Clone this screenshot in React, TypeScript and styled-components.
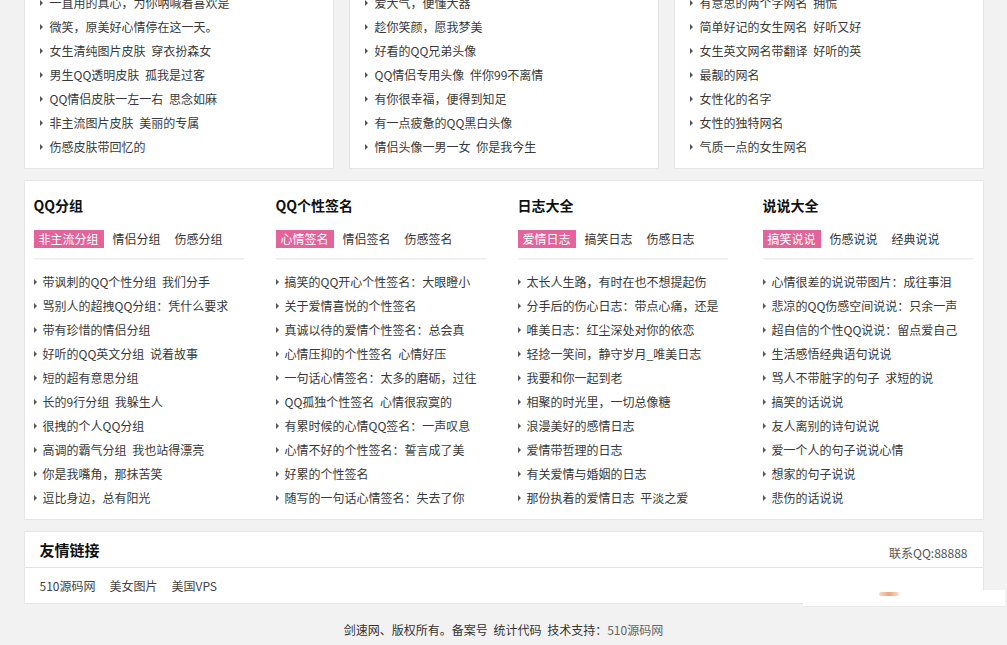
import React from "react";
import styled, { createGlobalStyle } from "styled-components";

const Global = createGlobalStyle`
  html, body { margin: 0; padding: 0; overflow: hidden; }
  body {
    background: #f2f2f2;
    font-family: "Noto Sans CJK SC", "Liberation Sans", sans-serif;
    font-size: 12px;
    color: #333;
  }
  ul { list-style: none; margin: 0; padding: 0; }
`;

const Wrap = styled.div`
  width: 960px;
  margin: 0 auto;
`;

const TopRow = styled.div`
  display: flex;
  gap: 15px;
  margin-top: -20px;
`;

const Card = styled.div`
  background: #fff;
  border: 1px solid #e6e6e6;
  box-sizing: border-box;
`;

const SmallCard = styled(Card)`
  width: 310px;
  padding: 10px 15px 9px 15px;
`;

const Item = styled.li<{ $gap?: number }>`
  display: flex;
  align-items: center;
  height: 24px;
  line-height: 24px;
  white-space: pre;
  word-spacing: 3px;
  overflow: hidden;
  color: #383838;
  &::before {
    content: "";
    flex: none;
    width: 0;
    height: 0;
    border-left: 3px solid #555;
    border-top: 3px solid transparent;
    border-bottom: 3px solid transparent;
    margin-right: ${(p) => p.$gap ?? 7}px;
  }
`;

const BigCard = styled(Card)`
  margin-top: 11px;
  padding: 14px 10px 9px 9px;
  display: flex;
`;

const Column = styled.div<{ $last?: boolean }>`
  width: 210px;
  flex: none;
  margin-right: ${(p) => (p.$last ? 0 : 32)}px;
  margin-left: ${(p) => (p.$last ? "auto" : 0)};
`;

const Title = styled.h3`
  margin: 0;
  height: 20px;
  line-height: 20px;
  font-size: 14px;
  font-weight: bold;
  color: #111;
`;

const Tabs = styled.div`
  display: flex;
  gap: 4px;
  margin-top: 15px;
  padding-bottom: 10px;
  border-bottom: 1px solid #ececec;
  box-shadow: 0 1px 0 #f6f6f6;
`;

const Tab = styled.span<{ $active?: boolean }>`
  display: inline-block;
  height: 18px;
  line-height: 18px;
  padding: 0 5px;
  color: ${(p) => (p.$active ? "#fff" : "#333")};
  background: ${(p) => (p.$active ? "#e2649a" : "transparent")};
`;

const ColList = styled.ul`
  margin-top: 11px;
`;

const LinksCard = styled(Card)`
  margin-top: 11px;
`;

const LinksHead = styled.div`
  display: flex;
  align-items: center;
  justify-content: space-between;
  height: 35px;
  padding: 0 15px;
  border-bottom: 1px solid #e3e3e3;
`;

const LinksTitle = styled.h3`
  margin: 0;
  font-size: 15px;
  font-weight: bold;
  color: #111;
`;

const Contact = styled.span`
  color: #555;
  padding-top: 5px;
`;

const LinksBody = styled.div`
  display: flex;
  align-items: center;
  gap: 14px;
  height: 35px;
  padding: 0 15px;
`;

const LinkA = styled.a`
  color: #444;
  text-decoration: none;
`;

const Footer = styled.div`
  text-align: center;
  padding-top: 14px;
  line-height: 24px;
  color: #333;
  word-spacing: 3px;
`;

const FootLink = styled.span`
  color: #666;
`;

const Overlay = styled.div`
  position: fixed;
  left: 803px;
  top: 590px;
  width: 202px;
  height: 16px;
  background: #fff;
  border-bottom: 1px solid #e8e8e8;
  &::after {
    content: "";
    position: absolute;
    left: 76px;
    top: 2px;
    width: 20px;
    height: 4px;
    border-radius: 2px;
    background: linear-gradient(90deg, #f3d2bd, #e5905c, #f4d7c6);
    opacity: 0.8;
  }
`;

const top = [
  [
    "一直用的真心，为你呐喊着喜欢是",
    "微笑，原美好心情停在这一天。",
    "女生清纯图片皮肤 穿衣扮森女",
    "男生QQ透明皮肤 孤我是过客",
    "QQ情侣皮肤一左一右 思念如麻",
    "非主流图片皮肤 美丽的专属",
    "伤感皮肤带回忆的",
  ],
  [
    "爱大气，便懂大器",
    "趁你笑颜，愿我梦美",
    "好看的QQ兄弟头像",
    "QQ情侣专用头像 伴你99不离情",
    "有你很幸福，便得到知足",
    "有一点疲惫的QQ黑白头像",
    "情侣头像一男一女 你是我今生",
  ],
  [
    "有意思的两个字网名 拥慌",
    "简单好记的女生网名 好听又好",
    "女生英文网名带翻译 好听的英",
    "最靓的网名",
    "女性化的名字",
    "女性的独特网名",
    "气质一点的女生网名",
  ],
];

const cols = [
  {
    title: "QQ分组",
    tabs: ["非主流分组", "情侣分组", "伤感分组"],
    items: [
      "带讽刺的QQ个性分组 我们分手",
      "骂别人的超拽QQ分组：凭什么要求",
      "带有珍惜的情侣分组",
      "好听的QQ英文分组 说着故事",
      "短的超有意思分组",
      "长的9行分组 我躲生人",
      "很拽的个人QQ分组",
      "高调的霸气分组 我也站得漂亮",
      "你是我嘴角，那抹苦笑",
      "逗比身边，总有阳光",
    ],
  },
  {
    title: "QQ个性签名",
    tabs: ["心情签名", "情侣签名", "伤感签名"],
    items: [
      "搞笑的QQ开心个性签名：大眼瞪小",
      "关于爱情喜悦的个性签名",
      "真诚以待的爱情个性签名：总会真",
      "心情压抑的个性签名 心情好压",
      "一句话心情签名：太多的磨砺，过往",
      "QQ孤独个性签名 心情很寂寞的",
      "有累时候的心情QQ签名：一声叹息",
      "心情不好的个性签名：誓言成了美",
      "好累的个性签名",
      "随写的一句话心情签名：失去了你",
    ],
  },
  {
    title: "日志大全",
    tabs: ["爱情日志", "搞笑日志", "伤感日志"],
    items: [
      "太长人生路，有时在也不想提起伤",
      "分手后的伤心日志：带点心痛，还是",
      "唯美日志：红尘深处对你的依恋",
      "轻捻一笑间，静守岁月_唯美日志",
      "我要和你一起到老",
      "相聚的时光里，一切总像糖",
      "浪漫美好的感情日志",
      "爱情带哲理的日志",
      "有关爱情与婚姻的日志",
      "那份执着的爱情日志 平淡之爱",
    ],
  },
  {
    title: "说说大全",
    tabs: ["搞笑说说", "伤感说说", "经典说说"],
    items: [
      "心情很差的说说带图片：成往事泪",
      "悲凉的QQ伤感空间说说：只余一声",
      "超自信的个性QQ说说：留点爱自己",
      "生活感悟经典语句说说",
      "骂人不带脏字的句子 求短的说",
      "搞笑的话说说",
      "友人离别的诗句说说",
      "爱一个人的句子说说心情",
      "想家的句子说说",
      "悲伤的话说说",
    ],
  },
];

export default function App() {
  return (
    <>
      <Global />
      <Wrap>
        <TopRow>
          {top.map((list, i) => (
            <SmallCard key={i}>
              <ul>
                {list.map((t) => (
                  <Item key={t}>{t}</Item>
                ))}
              </ul>
            </SmallCard>
          ))}
        </TopRow>
        <BigCard>
          {cols.map((c, i) => (
            <Column key={c.title} $last={i === cols.length - 1}>
              <Title>{c.title}</Title>
              <Tabs>
                {c.tabs.map((t, j) => (
                  <Tab key={t} $active={j === 0}>
                    {t}
                  </Tab>
                ))}
              </Tabs>
              <ColList>
                {c.items.map((t) => (
                  <Item key={t} $gap={6}>
                    {t}
                  </Item>
                ))}
              </ColList>
            </Column>
          ))}
        </BigCard>
        <LinksCard>
          <LinksHead>
            <LinksTitle>友情链接</LinksTitle>
            <Contact>联系QQ:88888</Contact>
          </LinksHead>
          <LinksBody>
            <LinkA href="#">510源码网</LinkA>
            <LinkA href="#">美女图片</LinkA>
            <LinkA href="#">美国VPS</LinkA>
          </LinksBody>
        </LinksCard>
        <Footer>
          剑速网、版权所有。备案号 统计代码 技术支持：<FootLink>510源码网</FootLink>
        </Footer>
      </Wrap>
      <Overlay />
    </>
  );
}
